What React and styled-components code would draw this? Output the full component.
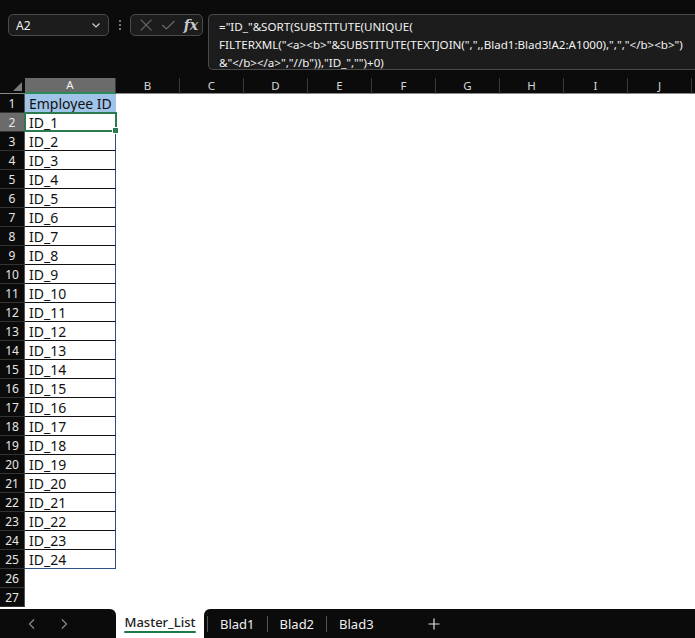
import React from "react";
import styled, { createGlobalStyle } from "styled-components";

const Global = createGlobalStyle`
  html, body { margin: 0; padding: 0; background: #0b0b0b; }
  body { font-family: "Noto Sans", "Open Sans", sans-serif; }
`;

const Page = styled.div`
  width: 695px;
  height: 638px;
  display: flex;
  flex-direction: column;
  background: #0b0b0b;
  overflow: hidden;
`;

const Toolbar = styled.div`
  height: 78px;
  box-sizing: border-box;
  padding: 14px 0 0 8px;
  display: flex;
  align-items: flex-start;
`;

const NameBox = styled.div`
  flex-shrink: 0;
  width: 101px;
  height: 22px;
  box-sizing: border-box;
  border: 1px solid #4a4a4a;
  border-radius: 5px;
  background: #1c1c1c;
  display: flex;
  align-items: center;
  justify-content: space-between;
  padding: 0 6px 0 7px;
  color: #f0f0f0;
  font-size: 12px;
`;

const Dots = styled.div`
  flex-shrink: 0;
  width: 21px;
  height: 22px;
  display: flex;
  flex-direction: column;
  align-items: center;
  justify-content: center;
  gap: 2px;
  span {
    width: 2px;
    height: 2px;
    border-radius: 1px;
    background: #9a9a9a;
  }
`;

const FxBox = styled.div`
  flex-shrink: 0;
  width: 73px;
  height: 22px;
  box-sizing: border-box;
  border: 1px solid #4a4a4a;
  border-radius: 5px;
  background: #1c1c1c;
  display: flex;
  align-items: center;
  padding: 0 4px 0 8px;
  gap: 8px;
`;

const FxLabel = styled.span`
  font-family: "DejaVu Serif", "Liberation Serif", serif;
  font-style: italic;
  font-weight: bold;
  color: #c8c8c8;
  font-size: 14px;
  margin-left: auto;
`;

const FormulaBox = styled.div`
  margin-left: 5px;
  flex: 1;
  min-width: 0;
  overflow: hidden;
  height: 56px;
  box-sizing: border-box;
  border: 1px solid #4a4a4a;
  border-right: none;
  border-radius: 5px 0 0 5px;
  background: #1c1c1c;
  padding: 3px 0 0 10px;
  color: #f2f2f2;
  font-size: 11.6px;
  line-height: 18px;
  white-space: pre;
`;

const Sheet = styled.div`
  display: grid;
  grid-template-columns: 25px 91px repeat(9, 64px) 1fr;
  grid-auto-rows: 19px;
  grid-template-rows: 16px;
  background: #ffffff;
`;

const Corner = styled.div`
  background: #0b0b0b;
  position: relative;
  border-bottom: 1px solid #8a8a8a;
  box-sizing: border-box;
  &::after {
    content: "";
    position: absolute;
    right: 3px;
    bottom: 2px;
    width: 0;
    height: 0;
    border-left: 9px solid transparent;
    border-bottom: 9px solid #7a7a7a;
  }
`;

const ColHead = styled.div`
  background: ${(p) => (p.$active ? "#6b6b6b" : "#0b0b0b")};
  color: ${(p) => (p.$active ? "#f4f4f4" : "#d8d8d8")};
  border-right: 1px solid #3a3a3a;
  border-bottom: ${(p) => (p.$active ? "2px solid #2e8b57" : "1px solid #8a8a8a")};
  box-sizing: border-box;
  font-size: 11.5px;
  display: flex;
  align-items: center;
  justify-content: center;
  line-height: 1;
`;

const RowHead = styled.div`
  background: ${(p) => (p.$active ? "#6b6b6b" : "#0b0b0b")};
  color: #e6e6e6;
  border-bottom: 1px solid #333;
  border-right: 1px solid #555;
  box-sizing: border-box;
  font-size: 12px;
  display: flex;
  align-items: center;
  justify-content: center;
`;

const Cell = styled.div`
  position: relative;
  z-index: ${(p) => (p.$selected ? 2 : "auto")};
  box-sizing: border-box;
  background: ${(p) => (p.$header ? "#a0c4e8" : "#ffffff")};
  border-bottom: ${(p) => (p.$bordered ? (p.$last ? "1px solid #2f4e86" : "1px solid #111") : "none")};
  border-right: ${(p) => (p.$bordered ? "1px solid #2f4e86" : "none")};
  color: #111;
  font-size: 14px;
  padding-left: 4px;
  display: flex;
  align-items: center;
  white-space: nowrap;
`;

const Selection = styled.div`
  position: absolute;
  left: -1px;
  top: -1px;
  right: -2px;
  bottom: -1px;
  border: 2px solid #2e7a4f;
  pointer-events: none;
  &::after {
    content: "";
    position: absolute;
    right: -4px;
    bottom: -4px;
    width: 5px;
    height: 5px;
    background: #2e7a4f;
    border: 1px solid #fff;
  }
`;

const Filler = styled.div`
  background: #ffffff;
  flex: 1;
`;

const SheetArea = styled.div`
  flex: 1;
  background: #fff;
  display: flex;
  flex-direction: column;
`;

const TabBar = styled.div`
  height: 29px;
  display: flex;
  background: #ffffff;
`;

const NavArea = styled.div`
  width: 116px;
  background: #0b0b0b;
  border-top-right-radius: 6px;
  display: flex;
  align-items: center;
  padding-left: 27px;
  gap: 22px;
  box-sizing: border-box;
  color: #8c8c8c;
`;

const ActiveTab = styled.div`
  width: 88px;
  display: flex;
  align-items: center;
  justify-content: center;
  background: #fff;
  color: #222;
  font-size: 13px;
  font-weight: 500;
  position: relative;
  padding-bottom: 3px;
  box-sizing: border-box;
  &::after {
    content: "";
    position: absolute;
    left: 8px;
    right: 8px;
    bottom: 5px;
    height: 2px;
    background: #1e7a45;
    border-radius: 1px;
  }
`;

const RestBar = styled.div`
  flex: 1;
  background: #0b0b0b;
  border-top-left-radius: 6px;
  display: flex;
  align-items: center;
  padding-left: 3px;
`;

const Tab = styled.div`
  height: 16px;
  display: flex;
  align-items: center;
  padding: 0 12px;
  border-left: 1px solid #555;
  color: #f0f0f0;
  font-size: 13px;
  &:last-of-type {
    border-right: 1px solid #555;
  }
`;

const Plus = styled.div`
  margin-left: 42px;
  color: #e0e0e0;
  display: flex;
`;

const Chevron = () => (
  <svg width="12" height="12" viewBox="0 0 12 12" fill="none" stroke="#d0d0d0" strokeWidth="1.2">
    <path d="M2.5 4.5 L6 8 L9.5 4.5" />
  </svg>
);

const XIcon = () => (
  <svg width="16" height="16" viewBox="0 0 16 16" fill="none" stroke="#6a6a6a" strokeWidth="1.3">
    <path d="M2 2 L14 14 M14 2 L2 14" />
  </svg>
);

const CheckIcon = () => (
  <svg width="16" height="16" viewBox="0 0 16 16" fill="none" stroke="#6a6a6a" strokeWidth="1.3">
    <path d="M1.5 8 L6 12.5 L15 3.5" />
  </svg>
);

const NavArrow = ({ dir }) => (
  <svg width="10" height="12" viewBox="0 0 10 12" fill="none" stroke="#8c8c8c" strokeWidth="1.2">
    {dir === "left" ? <path d="M7 1.5 L2.5 6 L7 10.5" /> : <path d="M3 1.5 L7.5 6 L3 10.5" />}
  </svg>
);

const PlusIcon = () => (
  <svg width="12" height="12" viewBox="0 0 12 12" fill="none" stroke="#e0e0e0" strokeWidth="1.2">
    <path d="M6 0.5 V11.5 M0.5 6 H11.5" />
  </svg>
);

const formula = `="ID_"&SORT(SUBSTITUTE(UNIQUE(
FILTERXML("<a><b>"&SUBSTITUTE(TEXTJOIN(",",,Blad1:Blad3!A2:A1000),",","</b><b>")
&"</b></a>","//b")),"ID_","")+0)`;

const columns = ["A", "B", "C", "D", "E", "F", "G", "H", "I", "J"];

export default function App() {
  const rows = [];
  for (let r = 1; r <= 27; r++) {
    rows.push(
      <React.Fragment key={r}>
        <RowHead $active={r === 2}>{r}</RowHead>
        <Cell $header={r === 1} $bordered={r >= 2 && r <= 25} $last={r === 25} $selected={r === 2}>
          {r === 1 ? "Employee ID" : r <= 25 ? `ID_${r - 1}` : ""}
          {r === 2 && <Selection />}
        </Cell>
        {Array.from({ length: 10 }).map((_, i) => (
          <Cell key={i} />
        ))}
      </React.Fragment>
    );
  }

  return (
    <Page>
      <Global />
      <Toolbar>
        <NameBox>
          <span>A2</span>
          <Chevron />
        </NameBox>
        <Dots>
          <span />
          <span />
          <span />
        </Dots>
        <FxBox>
          <XIcon />
          <CheckIcon />
          <FxLabel>fx</FxLabel>
        </FxBox>
        <FormulaBox>{formula}</FormulaBox>
      </Toolbar>
      <SheetArea>
        <Sheet>
          <Corner />
          {columns.map((c) => (
            <ColHead key={c} $active={c === "A"}>
              {c}
            </ColHead>
          ))}
          <ColHead />
          {rows}
        </Sheet>
        <Filler />
      </SheetArea>
      <TabBar>
        <NavArea>
          <NavArrow dir="left" />
          <NavArrow dir="right" />
        </NavArea>
        <ActiveTab>Master_List</ActiveTab>
        <RestBar>
          <Tab>Blad1</Tab>
          <Tab>Blad2</Tab>
          <Tab>Blad3</Tab>
          <Plus>
            <PlusIcon />
          </Plus>
        </RestBar>
      </TabBar>
    </Page>
  );
}
